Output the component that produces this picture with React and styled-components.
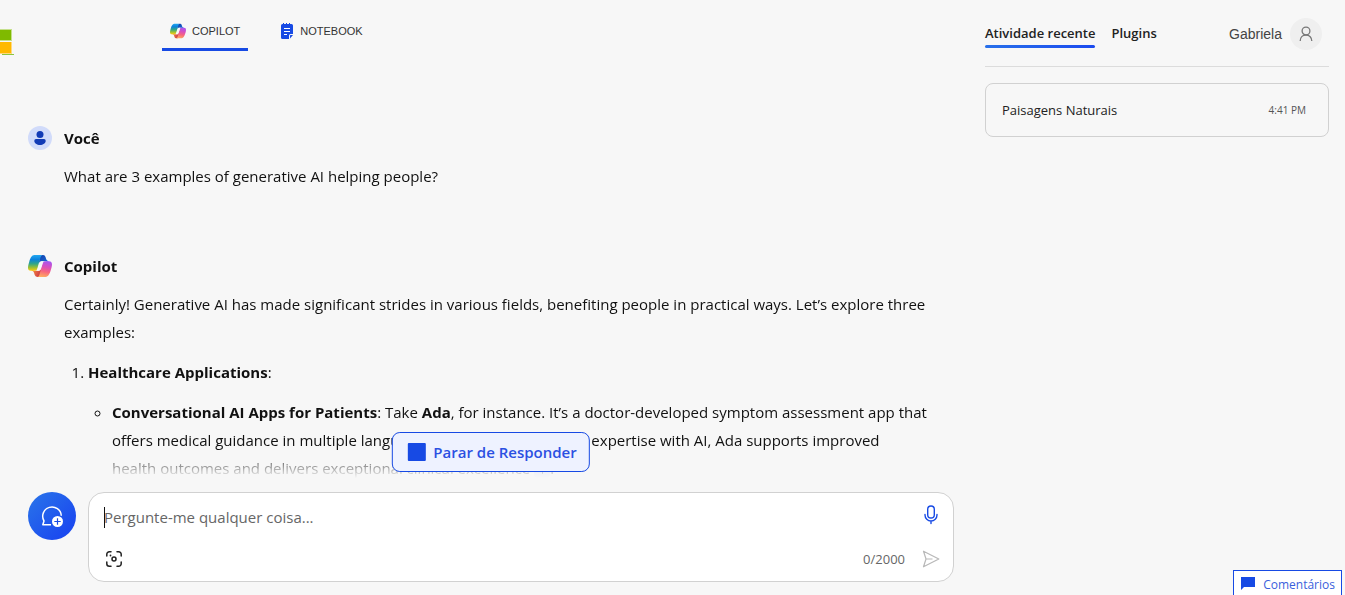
import React, { useId } from "react";
import styled, { createGlobalStyle } from "styled-components";

const blue = "#174ae4";

const GlobalStyle = createGlobalStyle`
  *, *::before, *::after { box-sizing: border-box; }
  body {
    margin: 0;
    background: #f7f7f7;
    color: #111;
    font-family: "Open Sans", "Noto Sans", sans-serif;
    font-size: 15px;
    line-height: 28px;
  }
  button { font: inherit; color: inherit; border: 0; padding: 0; background: none; cursor: pointer; }
  a { color: inherit; text-decoration: none; }
  svg { display: block; flex: none; }
`;

const Page = styled.div`
  display: flex;
  height: 100vh;
  overflow: hidden;
`;

const Main = styled.main`
  flex: 1;
  min-width: 0;
  display: flex;
  flex-direction: column;
`;

const TopBar = styled.header`
  flex: none;
  display: flex;
  align-items: flex-start;
  height: 66px;
`;

const BrandLink = styled.a`
  width: 162px;
  padding-top: 28px;
`;

const Tabs = styled.nav`
  display: flex;
  gap: 24px;
  padding-top: 10px;
`;

const Tab = styled.a`
  display: flex;
  align-items: center;
  gap: 6px;
  height: 41px;
  padding: 3px 8px 0;
  font: 11px/16px "Liberation Sans", sans-serif;
  color: #333;
  border-bottom: 3px solid ${(p) => (p.$active ? blue : "transparent")};
`;

const ChatArea = styled.div`
  flex: 1;
  min-height: 0;
  position: relative;
`;

const Conversation = styled.div`
  height: 100%;
  overflow: hidden;
  padding: 60px 16px 0 28px;
  display: flex;
  flex-direction: column;
  gap: 64px;
  mask-image: linear-gradient(to top, transparent 2px, #000 30px);
`;

const Message = styled.article`
  display: flex;
  flex-direction: column;
  gap: 12px;
`;

const Author = styled.h2`
  display: flex;
  align-items: center;
  gap: 12px;
  margin: 0;
  font-size: 15px;
  line-height: 24px;
  font-weight: 700;
`;

const MessageBody = styled.div`
  padding-left: 36px;

  p { margin: 0 0 12px; }
  ol, ul { margin: 0; padding-left: 24px; }
  ul { margin-top: 12px; }
`;

const Reference = styled.sup`
  display: inline-block;
  width: 16px;
  margin-left: 4px;
  border-radius: 4px;
  background: #d1dbfa;
  font-size: 10px;
  line-height: 16px;
  text-align: center;
  vertical-align: middle;
`;

const StopButton = styled.button`
  position: absolute;
  left: calc(50% + 6px);
  bottom: 8px;
  transform: translateX(-50%);
  display: flex;
  align-items: center;
  gap: 8px;
  height: 40px;
  padding: 0 12px 0 15px;
  border: 1px solid ${blue};
  border-radius: 8px;
  background: #eef2ff;
  color: #2b50e2;
  font-size: 15px;
  font-weight: 600;
  white-space: nowrap;

  &::before {
    content: "";
    width: 18px;
    height: 18px;
    border-radius: 1px;
    background: ${blue};
  }
`;

const Composer = styled.form`
  flex: none;
  display: flex;
  align-items: flex-start;
  gap: 12px;
  margin: 0;
  padding: 12px 15px 13px 28px;
`;

const NewTopic = styled.button`
  display: grid;
  place-items: center;
  flex: none;
  width: 48px;
  height: 48px;
  border-radius: 50%;
  background: linear-gradient(135deg, #2870ea 10%, #1b4aef 80%);
`;

const InputCard = styled.div`
  flex: 1;
  min-width: 0;
  height: 90px;
  display: flex;
  flex-direction: column;
  justify-content: space-between;
  padding: 10px 12px 10px 15px;
  border: 1px solid #d1d1d1;
  border-radius: 16px;
  background: #fff;
`;

const InputRow = styled.div`
  display: flex;
  align-items: flex-start;
`;

const Field = styled.div`
  flex: 1;
  position: relative;
  display: flex;

  &::before {
    content: "";
    position: absolute;
    left: 0;
    top: 4px;
    width: 1px;
    height: 21px;
    background: #111;
  }
`;

const Prompt = styled.input`
  flex: 1;
  min-width: 0;
  height: 28px;
  border: 0;
  outline: 0;
  padding: 0;
  background: transparent;
  font: inherit;
  color: #111;
  &::placeholder { color: #666; opacity: 1; }
`;

const IconButton = styled.button`
  display: grid;
  place-items: center;
  width: 20px;
  height: 24px;
`;

const Counter = styled.span`
  margin: 0 16px 0 auto;
  font-size: 13px;
  line-height: 24px;
  color: #666;
`;

const Sidebar = styled.aside`
  flex: none;
  width: 376px;
  padding: 0 16px;
`;

const SideHeader = styled.div`
  display: flex;
  justify-content: space-between;
  height: 67px;
  padding: 18px 7px 0 0;
  border-bottom: 1px solid #dcdcdc;
`;

const SideTabs = styled.nav`
  display: flex;
  align-items: flex-start;
  gap: 16px;
`;

const SideTab = styled.a`
  font-size: 13px;
  line-height: 30px;
  font-weight: 600;
  color: #222;

  &::after {
    content: "";
    display: block;
    height: 3px;
    margin-top: -3px;
    border-radius: 2px;
    background: ${(p) => (p.$active ? "linear-gradient(90deg, #2870ea, #1b4aef)" : "none")};
  }
`;

const Account = styled.a`
  display: flex;
  align-items: center;
  gap: 8px;
  height: 32px;
  font: 14px/20px "Liberation Sans", sans-serif;
  color: #444;
`;

const Avatar = styled.span`
  display: grid;
  place-items: center;
  width: 32px;
  height: 32px;
  border-radius: 50%;
  background: #efefef;
`;

const HistoryItem = styled.a`
  display: flex;
  align-items: center;
  justify-content: space-between;
  height: 54px;
  margin-top: 16px;
  padding: 0 22px 0 16px;
  border: 1px solid #d1d1d1;
  border-radius: 8px;
  font-size: 13px;
  line-height: 20px;
  color: #222;

  time { font-size: 10px; color: #555; }
`;

const Feedback = styled.button`
  position: fixed;
  right: 3px;
  bottom: 0;
  display: flex;
  align-items: center;
  gap: 8px;
  height: 25px;
  padding: 4px 6px 0;
  border: 1px solid ${blue};
  border-bottom: 0;
  background: #fff;
  color: #3a5fdc;
  font-size: 12px;
  line-height: 20px;
`;

function CopilotLogo({ size }) {
  const id = useId();
  const url = (n) => `url(#${id}${n})`;
  return (
    <svg width={size} height={size} viewBox="2 2 44 44" aria-hidden="true">
      <defs>
        <linearGradient id={id + "a"} x1="0" y1="0" x2="0" y2="1">
          <stop offset="0" stopColor="#22a7f0" />
          <stop offset=".28" stopColor="#0b83dd" />
          <stop offset=".55" stopColor="#31a689" />
          <stop offset=".78" stopColor="#96bf36" />
          <stop offset="1" stopColor="#ffcd0f" />
        </linearGradient>
        <linearGradient id={id + "b"} x1=".6" y1="0" x2=".4" y2="1">
          <stop offset="0" stopColor="#a855f0" />
          <stop offset=".35" stopColor="#d94fbd" />
          <stop offset=".65" stopColor="#f7657f" />
          <stop offset="1" stopColor="#ffab60" />
        </linearGradient>
        <linearGradient id={id + "c"} x1="0" y1="0" x2="1" y2="1">
          <stop offset="0" stopColor="#163da8" />
          <stop offset="1" stopColor="#1274e0" />
        </linearGradient>
        <linearGradient id={id + "d"} x1="0" y1="0" x2="1" y2=".4">
          <stop offset="0" stopColor="#ff9a3d" />
          <stop offset="1" stopColor="#cf3d46" />
        </linearGradient>
      </defs>
      <path fill={url("c")} d="M34.14 7.32A4.63 4.63 0 0 0 29.7 4h-1.35a4.63 4.63 0 0 0-4.55 3.79L21.48 20.4l.57-1.96a4.63 4.63 0 0 1 4.45-3.33h7.85l3.3 1.28 3.17-1.28h-.93a4.63 4.63 0 0 1-4.44-3.33z" />
      <path fill={url("d")} d="M14.33 40.66A4.63 4.63 0 0 0 18.78 44h2.87a4.63 4.63 0 0 0 4.63-4.51l.31-12.16-.65 2.23a4.63 4.63 0 0 1-4.45 3.33h-7.92l-2.82-1.53-3.06 1.53h.92a4.63 4.63 0 0 1 4.44 3.34z" />
      <path fill={url("a")} d="M29.5 4H13.46c-4.58 0-7.33 6.06-9.17 12.11-2.17 7.18-5.01 16.78 3.21 16.78h6.93a4.63 4.63 0 0 0 4.46-3.37c1.47-5.14 4.04-14.1 6.06-20.93 1.03-3.47 1.88-4.46 2.9-4.46z" />
      <path fill={url("b")} d="M18.5 44h16.04c4.58 0 7.33-6.06 9.16-12.11 2.17-7.18 5.02-16.78-3.2-16.78h-6.93a4.63 4.63 0 0 0-4.46 3.37c-1.47 5.14-4.04 14.1-6.06 20.94-1.03 3.46-2.1 4.58-4.55 4.58z" />
      <path fill="#f7f7f7" d="M24.500 16.500Q25.400 15.110 27.500 15.110H30.500Q29.500 16.500 28.900 18.500L24.200 31.500Q23.500 32.890 21.500 32.890H17.500Q19 31.500 19.500 29.500z" />
    </svg>
  );
}

const NotebookIcon = () => (
  <svg width="14" height="16" viewBox="0 0 14 16" aria-hidden="true">
    <path fill={blue} d="M1 2.5Q1 1 2.5 1H3V0h1v1h2V0h1v1h2V0h1v1h1.500Q13 1 13 2.500V11H10.500Q9 11 9 12.500V16H2.500Q1 16 1 14.500z" />
    <path fill={blue} d="M10 15.500V12.500Q10 12 10.500 12H13z" />
    <path stroke="#fff" strokeWidth="1" d="M4 5.500h6M4 8.500h6M4 11.500h3" />
  </svg>
);

const MicrosoftMark = () => (
  <svg width="15" height="28" viewBox="0 0 15 28" aria-hidden="true">
    <path fill="#c5e08c" d="M0 1h12v12H0z" />
    <path fill="#7fba00" d="M0 2h11v10H0z" />
    <path fill="#ffd980" d="M0 14h12v12H0z" />
    <path fill="#ffb900" d="M0 14h11v11H0z" />
    <path fill="#8cc63f" d="M2 26h12v1H2z" />
  </svg>
);

const UserBadge = () => (
  <svg width="24" height="24" viewBox="0 0 24 24" aria-hidden="true">
    <circle cx="12" cy="12" r="12" fill="#d1dbfa" />
    <circle cx="12" cy="8.500" r="3.500" fill="#123bb6" />
    <path fill="#123bb6" d="M8 13h8a1.700 1.700 0 0 1 1.700 1.700C17.700 17.300 15 19 12 19s-5.700-1.700-5.700-4.300A1.700 1.700 0 0 1 8 13z" />
  </svg>
);

const NewTopicIcon = () => (
  <svg width="24" height="24" viewBox="0 0 24 24" fill="none" aria-hidden="true">
    <path stroke="#fff" strokeWidth="1.500" strokeLinejoin="round" d="M11 20.800H2.800L4 17A9.300 9.300 0 1 1 21.300 11.800" />
    <circle cx="17.500" cy="17.500" r="5.500" fill="#fff" />
    <path stroke={blue} strokeWidth="1.200" d="M17.500 14.300v6.400M14.300 17.500h6.400" />
  </svg>
);

const MicIcon = () => (
  <svg width="14" height="20" viewBox="0 0 14 20" fill="none" stroke={blue} strokeWidth="1.400" strokeLinecap="round" aria-hidden="true">
    <rect x="3.700" y="1" width="6.600" height="12" rx="3.300" />
    <path d="M1 9.500v.5a6 6 0 0 0 12 0v-.5M7 16v2.500" />
  </svg>
);

const ScanIcon = () => (
  <svg width="18" height="18" viewBox="0 0 18 18" fill="none" stroke="#222" strokeWidth="1.500" strokeLinecap="round" aria-hidden="true">
    <path d="M1.800 6V4.300a2.500 2.500 0 0 1 2.500-2.500H6M12 1.800h1.700a2.500 2.500 0 0 1 2.500 2.500V6M16.200 12v1.700a2.500 2.500 0 0 1-2.500 2.500H12M6 16.200H4.300a2.500 2.500 0 0 1-2.500-2.500V12" />
    <circle cx="9" cy="9" r="2" />
    <circle cx="5.500" cy="5.500" r=".9" fill="#222" stroke="none" />
  </svg>
);

const SendIcon = () => (
  <svg width="18" height="18" viewBox="0 0 18 18" fill="none" stroke="#b8b8b8" strokeWidth="1.200" strokeLinejoin="round" aria-hidden="true">
    <path d="M1.500 1.200L16.800 9 1.500 16.800 4 9zM4 9h6.500" />
  </svg>
);

const PersonIcon = () => (
  <svg width="14" height="16" viewBox="0 0 14 16" fill="none" stroke="#777" strokeWidth="1.300" aria-hidden="true">
    <circle cx="7" cy="5" r="3.900" />
    <path d="M1.200 15C1.200 11.500 3.500 9 7 9s5.800 2.500 5.800 6" />
  </svg>
);

const FlagIcon = () => (
  <svg width="15" height="16" viewBox="0 0 15 16" aria-hidden="true">
    <path fill={blue} d="M1 0h14v10H4l-3 3z" />
  </svg>
);

export default function App() {
  return (
    <>
      <GlobalStyle />
      <Page>
        <Main>
          <TopBar>
            <BrandLink href="#" aria-label="Microsoft"><MicrosoftMark /></BrandLink>
            <Tabs>
              <Tab href="#copilot" $active><CopilotLogo size={16} />COPILOT</Tab>
              <Tab href="#notebook"><NotebookIcon />NOTEBOOK</Tab>
            </Tabs>
          </TopBar>
          <ChatArea>
            <Conversation>
              <Message>
                <Author><UserBadge />Você</Author>
                <MessageBody>What are 3 examples of generative AI helping people?</MessageBody>
              </Message>
              <Message>
                <Author><CopilotLogo size={24} />Copilot</Author>
                <MessageBody>
                  <p>
                    Certainly! Generative AI has made significant strides in various fields, benefiting
                    people in practical ways. Let’s explore three examples:
                  </p>
                  <ol>
                    <li>
                      <strong>Healthcare Applications</strong>:
                      <ul>
                        <li>
                          <strong>Conversational AI Apps for Patients</strong>: Take <strong>Ada</strong>,
                          for instance. It’s a doctor-developed symptom assessment app that offers medical
                          guidance in multiple languages. By combining human expertise with AI, Ada
                          supports improved health&nbsp;outcomes and delivers exceptional clinical
                          excellence<Reference>1</Reference>.
                        </li>
                      </ul>
                    </li>
                  </ol>
                </MessageBody>
              </Message>
            </Conversation>
            <StopButton type="button">Parar de Responder</StopButton>
          </ChatArea>
          <Composer onSubmit={(e) => e.preventDefault()}>
            <NewTopic type="button" aria-label="Novo tópico"><NewTopicIcon /></NewTopic>
            <InputCard>
              <InputRow>
                <Field>
                  <Prompt aria-label="Pergunte-me qualquer coisa" placeholder="Pergunte-me qualquer coisa..." />
                </Field>
                <IconButton type="button" aria-label="Usar microfone"><MicIcon /></IconButton>
              </InputRow>
              <InputRow>
                <IconButton type="button" aria-label="Adicionar imagem"><ScanIcon /></IconButton>
                <Counter>0/2000</Counter>
                <IconButton type="submit" aria-label="Enviar"><SendIcon /></IconButton>
              </InputRow>
            </InputCard>
          </Composer>
        </Main>
        <Sidebar>
          <SideHeader>
            <SideTabs>
              <SideTab href="#recent" $active>Atividade recente</SideTab>
              <SideTab href="#plugins">Plugins</SideTab>
            </SideTabs>
            <Account href="#account">Gabriela<Avatar><PersonIcon /></Avatar></Account>
          </SideHeader>
          <HistoryItem href="#chat">Paisagens Naturais<time>4:41 PM</time></HistoryItem>
        </Sidebar>
        <Feedback type="button"><FlagIcon />Comentários</Feedback>
      </Page>
    </>
  );
}
